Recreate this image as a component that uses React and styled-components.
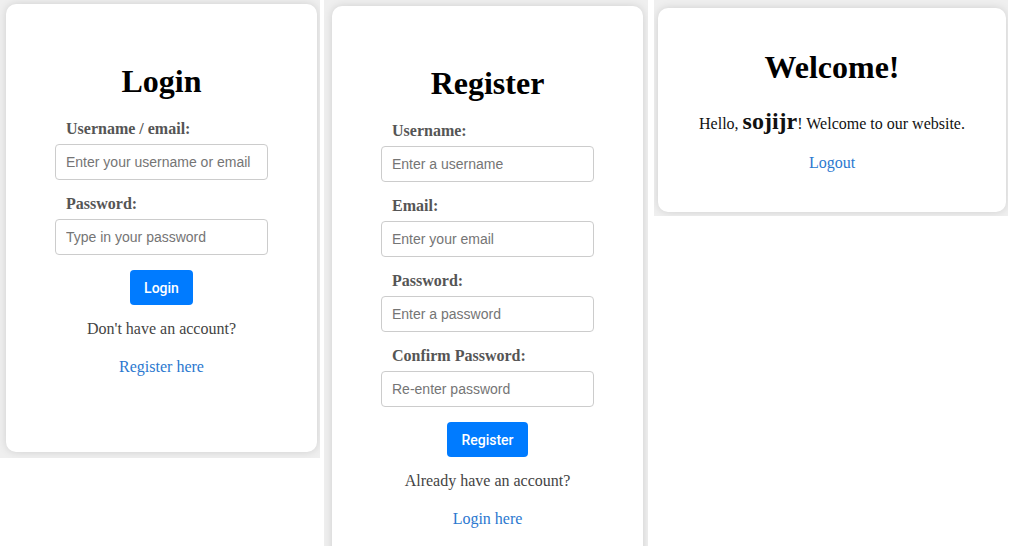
import React from "react";
import styled, { createGlobalStyle } from "styled-components";

const Global = createGlobalStyle`
  html, body { margin: 0; padding: 0; background: #ffffff; }
  body { font-family: "Liberation Serif", "Times New Roman", serif; }
  * { box-sizing: border-box; }
`;

const Strip = styled.div`
  display: flex;
  align-items: flex-start;
  width: 1014px;
  height: 546px;
  overflow: hidden;
`;

const Frame = styled.div`
  display: flex;
  flex: none;
  width: ${(p) => p.$w}px;
  height: ${(p) => p.$h}px;
  margin-left: ${(p) => p.$ml || 0}px;
  padding: ${(p) => p.$pad};
  background: #efefef;
  overflow: hidden;
`;

const Card = styled.div`
  flex: 1;
  display: flex;
  flex-direction: column;
  align-items: center;
  background: #ffffff;
  border-radius: 10px;
  box-shadow: 0 0 8px rgba(0, 0, 0, 0.13);
  padding-top: ${(p) => p.$pt}px;
  min-height: ${(p) => p.$minh || 0}px;
`;

const Title = styled.h1`
  margin: 0;
  font-family: "Liberation Serif", "Times New Roman", serif;
  font-size: 32px;
  line-height: 37px;
  font-weight: 700;
  color: #000;
`;

const Form = styled.form`
  width: 213px;
  margin-top: 20px;
  display: flex;
  flex-direction: column;
  align-items: stretch;
  gap: 15px;
`;

const Field = styled.div`
  display: flex;
  flex-direction: column;
`;

const Label = styled.label`
  margin-left: 11px;
  font-family: "Liberation Serif", "Times New Roman", serif;
  font-size: 16px;
  line-height: 18px;
  font-weight: 700;
  color: #555;
`;

const Input = styled.input`
  display: block;
  width: 100%;
  height: 36px;
  margin-top: 6px;
  padding: 0 10px;
  border: 1px solid #ccc;
  border-radius: 4px;
  background: #fff;
  font-family: "Liberation Sans", Arial, sans-serif;
  font-size: 14px;
  color: #333;
  outline: none;
  &::placeholder { color: #757575; }
`;

const Button = styled.button`
  align-self: center;
  margin-top: 0;
  height: 35px;
  padding: 0 14px;
  border: none;
  border-radius: 4px;
  background: #007bff;
  color: #fff;
  font-family: Roboto, "Liberation Sans", Arial, sans-serif;
  font-size: 14px;
  font-weight: 500;
  cursor: pointer;
`;

const Note = styled.p`
  margin: 15px 0 0;
  font-family: "Liberation Serif", "Times New Roman", serif;
  font-size: 16px;
  line-height: 18px;
  color: #444;
  text-align: center;
`;

const LinkLine = styled.p`
  margin: ${(p) => p.$mt}px 0 0;
  font-family: "Liberation Serif", "Times New Roman", serif;
  font-size: 16px;
  line-height: 18px;
  text-align: center;
`;

const Link = styled.a`
  color: #2b78cf;
  text-decoration: none;
`;

const Greeting = styled.p`
  margin: 26px 0 0;
  font-family: "Liberation Serif", "Times New Roman", serif;
  font-size: 16px;
  line-height: 18px;
  color: #111;
  text-align: center;
`;

const UserName = styled.strong`
  font-size: 24px;
  line-height: 18px;
  font-weight: 700;
  color: #111;
`;

function LoginCard() {
  return (
    <Card $pt={59}>
      <Title>Login</Title>
      <Form onSubmit={(e) => e.preventDefault()}>
        <Field>
          <Label>Username / email:</Label>
          <Input type="text" placeholder="Enter your username or email" />
        </Field>
        <Field>
          <Label>Password:</Label>
          <Input type="password" placeholder="Type in your password" />
        </Field>
        <Button type="submit">Login</Button>
      </Form>
      <Note>Don't have an account?</Note>
      <LinkLine $mt={20}>
        <Link href="#">Register here</Link>
      </LinkLine>
    </Card>
  );
}

function RegisterCard() {
  return (
    <Card $pt={59} $minh={600}>
      <Title>Register</Title>
      <Form onSubmit={(e) => e.preventDefault()}>
        <Field>
          <Label>Username:</Label>
          <Input type="text" placeholder="Enter a username" />
        </Field>
        <Field>
          <Label>Email:</Label>
          <Input type="email" placeholder="Enter your email" />
        </Field>
        <Field>
          <Label>Password:</Label>
          <Input type="password" placeholder="Enter a password" />
        </Field>
        <Field>
          <Label>Confirm Password:</Label>
          <Input type="password" placeholder="Re-enter password" />
        </Field>
        <Button type="submit">Register</Button>
      </Form>
      <Note>Already have an account?</Note>
      <LinkLine $mt={20}>
        <Link href="#">Login here</Link>
      </LinkLine>
    </Card>
  );
}

function WelcomeCard() {
  return (
    <Card $pt={41}>
      <Title>Welcome!</Title>
      <Greeting>
        Hello, <UserName>sojijr</UserName>! Welcome to our website.
      </Greeting>
      <LinkLine $mt={21}>
        <Link href="#">Logout</Link>
      </LinkLine>
    </Card>
  );
}

export default function App() {
  return (
    <>
      <Global />
      <Strip>
        <Frame $w={320} $h={458} $pad="4px 3px 6px 6px">
          <LoginCard />
        </Frame>
        <Frame $w={324} $h={546} $ml={4} $pad="6px 5px 0 8px">
          <RegisterCard />
        </Frame>
        <Frame $w={354} $h={216} $ml={6} $pad="8px 2px 4px 4px">
          <WelcomeCard />
        </Frame>
      </Strip>
    </>
  );
}
